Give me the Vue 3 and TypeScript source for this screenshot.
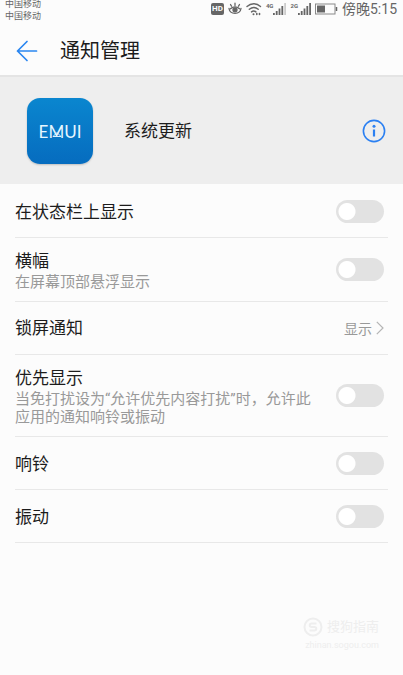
<script setup lang="ts">
import { reactive } from 'vue'

interface Row {
  id: string
  label: string
  hint?: string
  value?: string
  on?: boolean
}

const rows = reactive<Row[]>([
  { id: 'status-bar', label: '在状态栏上显示', on: false },
  { id: 'banner', label: '横幅', hint: '在屏幕顶部悬浮显示', on: false },
  { id: 'lock-screen', label: '锁屏通知', value: '显示' },
  {
    id: 'priority',
    label: '优先显示',
    hint: '当免打扰设为“允许优先内容打扰”时，允许此应用的通知响铃或振动',
    on: false,
  },
  { id: 'ring', label: '响铃', on: false },
  { id: 'vibrate', label: '振动', on: false },
])
</script>

<template>
  <div class="screen">
    <div class="status">
      <div class="carriers">
        <span>中国移动</span>
        <span>中国移动</span>
      </div>
      <div class="indicators">
        <span class="hd">HD</span>
        <svg width="14" height="14" viewBox="0 0 14 14" fill="none" stroke="#666" stroke-width="1.3" stroke-linecap="round">
          <path d="M1 6.500c1 6.500 11 6.500 12 0M2.500 6.800c2.500-2.600 6.500-2.600 9 0" />
          <circle cx="7" cy="7.800" r="2" fill="#666" />
          <path d="M7 3.500V1.200M3.500 4.200 2.500 2.500M10.500 4.200l1-1.700" />
        </svg>
        <svg width="16" height="14" viewBox="0 0 16 14" fill="none" stroke="#666" stroke-width="1.400" stroke-linecap="round">
          <path d="M1 4.500c4-3.600 9.500-3.600 13.500 0M3.300 7.300c2.700-2.300 6.200-2.300 8.900 0M5.500 9.900c1.400-1.100 3-1.100 4.400 0" />
          <circle cx="7.500" cy="12.300" r="1" fill="#666" stroke="none" />
          <path d="M10.800 12.500v-1M13.500 11.500v1" stroke-width="1.600" />
        </svg>
        <span class="signal">
          <span class="net">4G</span>
          <svg width="13" height="12" viewBox="0 0 13 12">
            <path d="M0 10h1.800v2H0zM2.800 8h1.800v4H2.800zM5.600 5.500h1.800V12H5.600zM8.400 3h1.800v9H8.400z" fill="#666" />
            <path d="M11.200 0H13v12h-1.800z" fill="#ccc" />
          </svg>
        </span>
        <span class="signal">
          <span class="net">2G</span>
          <svg width="13" height="12" viewBox="0 0 13 12">
            <path d="M0 10h1.800v2H0zM2.800 8h1.800v4H2.800zM5.600 5.500h1.800V12H5.600zM8.400 3h1.800v9H8.400zM11.200 0H13v12h-1.800z" fill="#666" />
          </svg>
        </span>
        <svg width="23" height="12" viewBox="0 0 23 12">
          <rect x=".5" y="1" width="19.500" height="10" fill="none" stroke="#888" />
          <rect x="2" y="2.500" width="8" height="7" fill="#666" />
          <path d="M21.500 4v4" stroke="#666" stroke-width="1.500" />
        </svg>
        <span class="clock">傍晚5:15</span>
      </div>
    </div>

    <header class="bar">
      <button class="icon-button" type="button" aria-label="返回">
        <svg width="22" height="22" viewBox="0 0 22 22" fill="none" stroke="#2a86f0" stroke-width="1.700" stroke-linecap="round" stroke-linejoin="round">
          <path d="M20.500 11H1.500M11 1.500 1.500 11l9.500 9.500" />
        </svg>
      </button>
      <h1>通知管理</h1>
    </header>

    <section class="app">
      <div class="logo">
        <span>EMUI</span>
        <svg class="facet" width="14" height="14" viewBox="0 0 14 14" fill="none" stroke="#d9f0ff">
          <path d="M7 8.500 3 12.500h8L7 8.500" />
        </svg>
      </div>
      <h2>系统更新</h2>
      <button class="icon-button" type="button" aria-label="应用信息">
        <svg width="24" height="24" viewBox="0 0 24 24" fill="none" stroke="#2b80f2">
          <circle cx="12" cy="12" r="10.600" stroke-width="1.600" />
          <path d="M12 10.500v7" stroke-width="2.200" />
          <circle cx="12" cy="7.300" r="1.500" fill="#2b80f2" stroke="none" />
        </svg>
      </button>
    </section>

    <main class="list">
      <template v-for="row in rows" :key="row.id">
        <a v-if="row.value" class="row" href="#">
          <span class="label">{{ row.label }}</span>
          <span class="value">
            {{ row.value }}
            <svg width="8" height="14" viewBox="0 0 8 14" fill="none" stroke="#b5b5b5" stroke-width="1.200">
              <path d="M.8.8 7 7 .8 13.200" />
            </svg>
          </span>
        </a>
        <label v-else class="row" :for="row.id">
          <span class="text">
            <span class="label">{{ row.label }}</span>
            <span v-if="row.hint" class="hint">{{ row.hint }}</span>
          </span>
          <input :id="row.id" v-model="row.on" class="switch" type="checkbox" role="switch" />
        </label>
      </template>
    </main>

    <footer class="mark">
      <div class="mark-name">
        <svg width="20" height="20" viewBox="0 0 20 20" fill="none" stroke="#eeeeee" stroke-width="2">
          <circle cx="10" cy="10" r="8.500" />
          <path d="M13.500 6.500h-5a1.700 1.700 0 0 0 0 3.500h3a1.700 1.700 0 0 1 0 3.500h-5" />
        </svg>
        <span>搜狗指南</span>
      </div>
      <span class="mark-site">zhinan.sogou.com</span>
    </footer>
  </div>
</template>

<style>
body {
  margin: 0;
  background: #fcfcfc;
}
</style>

<style scoped>
.screen {
  display: flex;
  flex-direction: column;
  min-height: 100vh;
  overflow: hidden;
  background: #fcfcfc;
  color: #1c1c1c;
  font-family: Roboto, "Noto Sans CJK SC", sans-serif;
}

.status {
  display: flex;
  justify-content: space-between;
  align-items: flex-start;
  height: 22px;
  padding: 0 6px 0 5px;
  color: #666;
}

.carriers {
  display: flex;
  flex-direction: column;
  justify-content: flex-end;
  height: 22px;
  font-size: 9px;
  line-height: 12px;
}

.indicators {
  display: flex;
  align-items: center;
  gap: 4px;
  height: 18px;
}

.hd {
  padding: 0 1px;
  border-radius: 2px;
  background: #666;
  color: #fcfcfc;
  font-size: 8px;
  font-weight: 700;
  line-height: 12px;
}

.signal {
  display: flex;
  align-items: flex-end;
}

.net {
  align-self: flex-start;
  font-size: 6px;
  font-weight: 700;
  line-height: 6px;
}

.clock {
  font-size: 14px;
  line-height: 18px;
}

.bar {
  display: flex;
  align-items: center;
  gap: 22px;
  height: 53px;
  padding: 4px 16px 0;
  box-sizing: border-box;
}

h1,
h2 {
  margin: 0;
  font-weight: 400;
}

h1 {
  font-size: 20px;
  line-height: 28px;
}

.icon-button {
  display: flex;
  padding: 0;
  border: 0;
  background: none;
  cursor: pointer;
}

.app {
  display: flex;
  align-items: center;
  padding: 21px 17px 20px 27px;
  border-top: 2px solid #e4e4e4;
  background: #eeeeee;
}

.logo {
  position: relative;
  display: flex;
  align-items: center;
  justify-content: center;
  width: 66px;
  height: 66px;
  border-radius: 13px;
  background: linear-gradient(#0a86cf, #066cbf);
  box-shadow: 0 1px 2px #0003;
  color: #e6f6ff;
  font-family: Lato, sans-serif;
  font-size: 17px;
  font-weight: 400;
}

.facet {
  position: absolute;
  top: 26px;
  left: 23px;
}

h2 {
  flex: 1;
  padding-left: 31px;
  font-size: 17px;
  line-height: 24px;
}

.list {
  display: flex;
  flex-direction: column;
  padding: 1px 15px 0;
}

.row {
  display: flex;
  align-items: center;
  justify-content: space-between;
  gap: 24px;
  min-height: 52px;
  padding: 0 4px 0 0;
  border-bottom: 1px solid #e8e8e8;
  color: inherit;
  text-decoration: none;
}

.text {
  display: flex;
  flex-direction: column;
  padding: 11px 0 10px;
}

.label {
  font-size: 17px;
  line-height: 24px;
}

.hint {
  color: #999;
  font-size: 15px;
  line-height: 18px;
}

.value {
  display: flex;
  align-items: center;
  gap: 4px;
  color: #999;
  font-size: 14px;
}

.switch {
  flex: none;
  width: 48px;
  height: 23px;
  margin: 0;
  border-radius: 12px;
  background: radial-gradient(circle at 11px 50%, #fff 8px, #e2e2e2 9px);
  appearance: none;
  cursor: pointer;
}

.switch:checked {
  background: radial-gradient(circle at 37px 50%, #fff 8px, #2b80f2 9px);
}

.mark {
  display: flex;
  flex-direction: column;
  align-items: flex-end;
  gap: 2px;
  margin-top: auto;
  padding: 0 24px 24px 0;
  color: #eeeeee;
}

.mark-name {
  display: flex;
  gap: 4px;
  font-size: 13px;
  line-height: 20px;
}

.mark-site {
  font-size: 9px;
  line-height: 12px;
}
</style>
